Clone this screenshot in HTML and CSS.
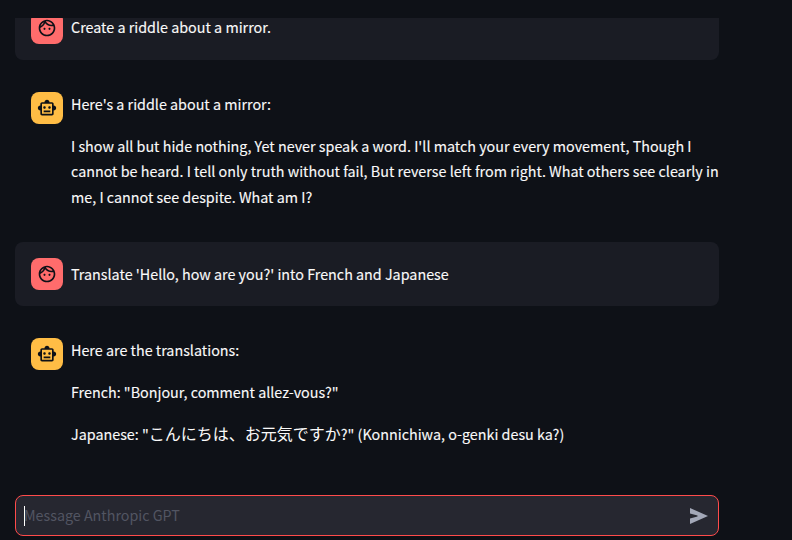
FILE: index.html
```html
<!DOCTYPE html>
<html lang="en">
<head>
<meta charset="utf-8">
<title>Anthropic GPT</title>
<link rel="stylesheet" href="styles.css">
</head>
<body>
<svg width="0" height="0" class="sprite" aria-hidden="true">
<symbol id="face" viewBox="0 0 24 24"><path d="M10.25 13c0 .69-.56 1.25-1.25 1.25S7.75 13.69 7.75 13s.56-1.25 1.25-1.25 1.25.56 1.25 1.25zM15 11.75c-.69 0-1.25.56-1.25 1.25s.56 1.25 1.25 1.25 1.25-.56 1.25-1.25-.56-1.25-1.25-1.25zm7 .25c0 5.52-4.48 10-10 10S2 17.52 2 12 6.48 2 12 2s10 4.48 10 10zM10.66 4.12C12.06 6.44 14.6 8 17.5 8c.46 0 .91-.05 1.34-.12C17.44 5.56 14.9 4 12 4c-.46 0-.91.05-1.34.12zM4.42 9.47c1.71-.97 3.03-2.55 3.66-4.44C6.37 6 5.05 7.58 4.42 9.47zM20 12c0-.78-.12-1.53-.33-2.24-.7.15-1.42.24-2.17.24-3.13 0-5.92-1.44-7.76-3.69C8.69 8.87 6.6 10.88 4 11.86c.01.04 0 .09 0 .14 0 4.42 3.58 8 8 8s8-3.58 8-8z"/></symbol>
<symbol id="bot" viewBox="0 0 24 24"><path d="M20 9V7c0-1.1-.9-2-2-2h-3c0-1.66-1.34-3-3-3S9 3.34 9 5H6c-1.1 0-2 .9-2 2v2c-1.66 0-3 1.34-3 3s1.34 3 3 3v4c0 1.1.9 2 2 2h12c1.1 0 2-.9 2-2v-4c1.66 0 3-1.34 3-3s-1.34-3-3-3zm-2 10H6V7h12v12zm-9-6c-.83 0-1.5-.67-1.5-1.5S8.17 10 9 10s1.5.67 1.5 1.5S9.83 13 9 13zm7.5-1.5c0 .83-.67 1.5-1.5 1.5s-1.5-.67-1.5-1.5.67-1.5 1.5-1.5 1.5.67 1.5 1.5zM8 15h8v2H8v-2z"/></symbol>
</svg>
<main class="app">
  <section class="thread">
    <article class="message user first">
      <div class="avatar"><svg><use href="#face"/></svg></div>
      <div class="content"><p>Create a riddle about a mirror.</p></div>
    </article>
    <article class="message bot">
      <div class="avatar"><svg><use href="#bot"/></svg></div>
      <div class="content">
        <p>Here's a riddle about a mirror:</p>
        <p>I show all but hide nothing, Yet never speak a word. I'll match your every movement, Though I<br>cannot be heard. I tell only truth without fail, But reverse left from right. What others see clearly in<br>me, I cannot see despite. What am I?</p>
      </div>
    </article>
    <article class="message user">
      <div class="avatar"><svg><use href="#face"/></svg></div>
      <div class="content"><p>Translate 'Hello, how are you?' into French and Japanese</p></div>
    </article>
    <article class="message bot">
      <div class="avatar"><svg><use href="#bot"/></svg></div>
      <div class="content">
        <p>Here are the translations:</p>
        <p>French: "Bonjour, comment allez-vous?"</p>
        <p class="mixed">Japanese: "<span class="ja" lang="ja">こんにちは、お元気ですか</span>?" (Konnichiwa, o-genki desu ka?)</p>
      </div>
    </article>
  </section>
  <div class="composer">
    <span class="caret"></span><span class="placeholder">Message Anthropic GPT</span>
    <svg class="send" viewBox="0 0 18 16"><path d="M0 0 18 8 0 16V10.6L7.5 8.6V7.4L0 5.4z"/></svg>
  </div>
</main>
</body>
</html>
```
FILE: styles.css
```css
* { box-sizing: border-box; }
body {
  margin: 0;
  height: 540px;
  overflow: hidden;
  background: #0e1117;
  color: #fafafa;
  font-family: "Noto Sans CJK JP", sans-serif;
  font-size: 14.34px;
  line-height: 25.6px;
}
.sprite { display: block; }
.app {
  width: 704px;
  height: 536px;
  margin-left: 15px;
  padding-top: 18px;
  display: flex;
  flex-direction: column;
}
.thread {
  height: 477px;
  overflow: hidden;
  display: flex;
  flex-direction: column;
  gap: 16px;
}
.message {
  display: flex;
  gap: 8px;
  padding: 16px;
  border-radius: 8px;
  flex: none;
}
.user { background: #1a1c24; }
.first { margin-top: -22px; }
.bot { padding-right: 0; padding-bottom: 16.6px; }
.avatar {
  flex: none;
  width: 32px;
  height: 32px;
  border-radius: 8px;
  display: flex;
  align-items: center;
  justify-content: center;
  background: #ffbd45;
}
.user .avatar { background: #ff6c6c; }
.avatar svg { width: 20px; height: 20px; fill: #0e1117; }
.content {
  margin-top: -1px;
  white-space: nowrap;
  -webkit-text-stroke: 0.12px #fafafa;
}
.content p { margin: 0 0 16px; }
.content p:last-child { margin-bottom: 0; }
.content .mixed { padding-top: 1px; }
.user .content { padding-top: 4px; height: 32px; }
.first .content { padding-top: 3px; }
.first .content p { line-height: 20px; padding-top: 3px; }
.ja { font-size: 16px; line-height: 1; -webkit-text-stroke: 0; }
.composer {
  flex: none;
  height: 41px;
  border: 1px solid #ff4b4b;
  border-radius: 8px;
  background: #262730;
  display: flex;
  align-items: center;
  padding: 0 10px 0 8px;
}
.caret { width: 1px; height: 20px; background: #fff; }
.placeholder { flex: 1; margin: -2px 0 0 -1px; font-size: 14.3px; color: #525562; }
.send { width: 18px; height: 16px; fill: #a3a8b8; }
```
